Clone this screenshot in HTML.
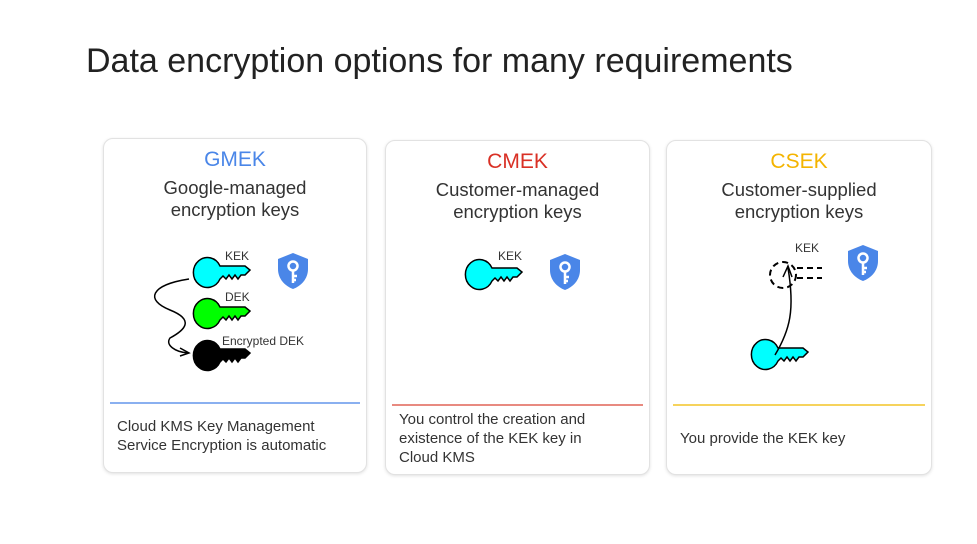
<!DOCTYPE html>
<html><head><style>
body{margin:0;width:977px;height:544px;background:#fff;font-family:"Liberation Sans",sans-serif;position:relative;overflow:hidden}
.t{position:absolute;left:86px;top:42px;font-size:34px;color:#222}
.c{position:absolute;border:1px solid #e2e2e2;border-radius:10px;box-shadow:0 1px 3px rgba(0,0,0,.12);background:#fff}
.h{position:absolute;left:0;right:0;text-align:center;font-size:21px;top:9px}
.s{position:absolute;left:0;right:0;text-align:center;font-size:18.5px;color:#333;top:38px;line-height:22px}
.l{position:absolute;left:6px;right:6px;top:263px;height:1.5px}
.d{position:absolute;left:13px;font-size:15px;color:#333;line-height:19px}
svg{position:absolute;left:0;top:0}
</style></head><body>
<div class="t">Data encryption options for many requirements</div>
<svg width="977" height="544">
<defs>
<path id="k" d="M27,8 L52,8 L57,12 L52,17 L48,17 L45,21 L42,17 L39,21 L36,17 L33,21 L30,18 L27,21 A14,15 0 1 1 27,8 Z" stroke="#000" stroke-width="1.5"/>
<g id="sh"><path d="M16,0 L31,6 L31,16 C31,26 24,33 16,36 C8,33 1,26 1,16 L1,6 Z" fill="#4a86e8"/><circle cx="16" cy="13" r="4.5" fill="none" stroke="#fff" stroke-width="2.5"/><path d="M16,17 V30 M16,23 H20 M16,27 H19" stroke="#fff" stroke-width="2.5"/></g>
</defs>
</svg>
<div class="c" style="left:103px;top:138px;width:262px;height:333px">
<div class="h" style="color:#4a86e8">GMEK</div>
<div class="s">Google-managed<br>encryption keys</div>
<div class="l" style="background:#8ab0f0"></div>
<div class="d" style="top:278px">Cloud KMS Key Management<br>Service Encryption is automatic</div>
</div>
<div class="c" style="left:385px;top:140px;width:263px;height:333px">
<div class="h" style="color:#d93025">CMEK</div>
<div class="s">Customer-managed<br>encryption keys</div>
<div class="l" style="background:#e88a80"></div>
<div class="d" style="top:269px">You control the creation and<br>existence of the KEK key in<br>Cloud KMS</div>
</div>
<div class="c" style="left:666px;top:140px;width:264px;height:333px">
<div class="h" style="color:#f4b400">CSEK</div>
<div class="s">Customer-supplied<br>encryption keys</div>
<div class="l" style="background:#f6d35c"></div>
<div class="d" style="top:288px">You provide the KEK key</div>
</div>
<svg width="977" height="544" style="font-family:'Liberation Sans',sans-serif;font-size:12px" fill="#333">
<use href="#k" x="193" y="258" fill="#00ffff"/>
<use href="#k" x="193" y="299" fill="#00ff00"/>
<use href="#k" x="193" y="341" fill="#000"/>
<text x="225" y="260">KEK</text>
<text x="225" y="301">DEK</text>
<text x="222" y="345">Encrypted DEK</text>
<use href="#sh" x="277" y="253"/>
<path d="M189,279 C150,285 145,300 170,310 C195,320 185,330 170,338 C165,345 175,352 188,353" fill="none" stroke="#000" stroke-width="1.5"/>
<path d="M180,348 L189,353 L180,356" fill="none" stroke="#000" stroke-width="1.5"/>
<use href="#k" x="465" y="260" fill="#00ffff"/>
<text x="498" y="260">KEK</text>
<use href="#sh" x="549" y="254"/>
<use href="#k" x="751" y="340" fill="#00ffff"/>
<text x="795" y="252">KEK</text>
<use href="#sh" x="847" y="245"/>
<circle cx="783" cy="275" r="13" fill="none" stroke="#000" stroke-width="2" stroke-dasharray="6,4"/>
<path d="M797,268 L822,268 M797,278 L822,278" stroke="#000" stroke-width="2" stroke-dasharray="6,4"/>
<path d="M775,355 C790,330 795,310 788,268" fill="none" stroke="#000" stroke-width="1.5"/>
<path d="M783,277 L788,266 L792,277" fill="none" stroke="#000" stroke-width="1.5"/>
</svg>
</body></html>
